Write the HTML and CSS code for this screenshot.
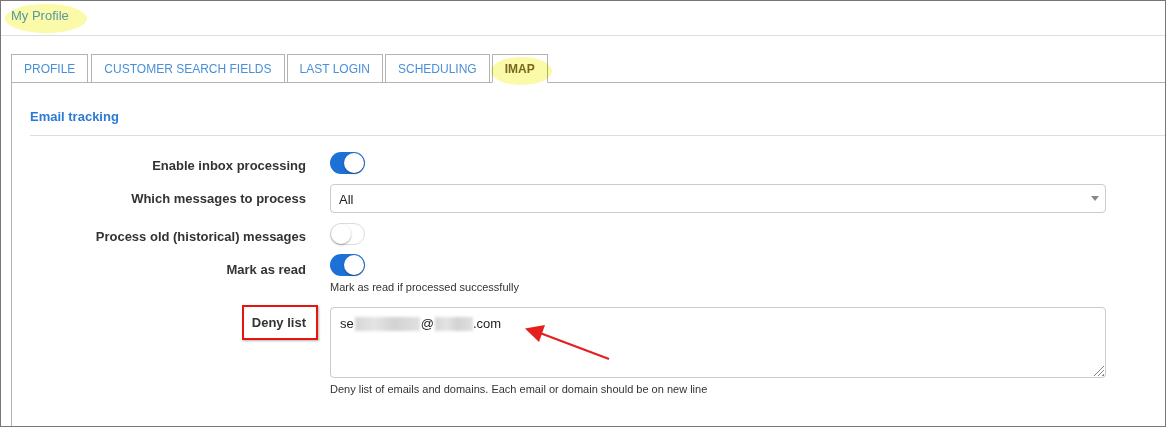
FILE: index.html
```html
<!DOCTYPE html>
<html>
<head>
<meta charset="utf-8">
<link rel="stylesheet" href="styles.css">
</head>
<body>
<div class="frame">
  <div class="page-header"><span class="page-title">My Profile</span></div>
  <ul class="tabs">
    <li class="tab">PROFILE</li>
    <li class="tab">CUSTOMER SEARCH FIELDS</li>
    <li class="tab">LAST LOGIN</li>
    <li class="tab">SCHEDULING</li>
    <li class="tab active">IMAP</li>
  </ul>
  <div class="tab-content">
    <div class="section-title">Email tracking</div>
    <div class="form">
      <div class="form-row r1">
        <div class="label">Enable inbox processing</div>
        <div class="control"><span class="switch on"></span></div>
      </div>
      <div class="form-row r2">
        <div class="label">Which messages to process</div>
        <div class="control"><div class="select"><span class="sel-text">All</span><span class="caret"></span></div></div>
      </div>
      <div class="form-row r3">
        <div class="label">Process old (historical) messages</div>
        <div class="control"><span class="switch off"></span></div>
      </div>
      <div class="form-row r4">
        <div class="label">Mark as read</div>
        <div class="control"><span class="switch on"></span><div class="help">Mark as read if processed successfully</div></div>
      </div>
      <div class="form-row r5">
        <div class="label"><span class="marked">Deny list</span></div>
        <div class="control">
          <div class="textarea">
            <div class="ta-text">se<span class="smudge w1"></span>@<span class="smudge w2"></span>.com</div>
            <div class="grip"></div>
          </div>
          <div class="help">Deny list of emails and domains. Each email or domain should be on new line</div>
        </div>
      </div>
    </div>
  </div>
  <div class="hl hl-title"></div>
  <div class="hl hl-tab"></div>
  <svg class="arrow" width="95" height="45" viewBox="0 0 95 45">
    <line x1="20" y1="13" x2="89" y2="39" stroke="#e3201e" stroke-width="2.2"/>
    <polygon points="5,8.5 25,5 19,22" fill="#e3201e"/>
  </svg>
</div>
</body>
</html>
```

FILE: styles.css
```css
html, body {
  margin: 0;
  padding: 0;
  background: #fff;
}
.frame {
  position: relative;
  width: 1166px;
  height: 427px;
  box-sizing: border-box;
  border: 1px solid #767676;
  overflow: hidden;
  font-family: "Liberation Sans", Arial, sans-serif;
  color: #333;
}
.page-header {
  height: 35px;
  border-bottom: 1px solid #dedede;
  padding: 5px 0 0 10px;
  box-sizing: border-box;
}
.page-title {
  font-size: 13px;
  line-height: 16px;
  color: #5a9cf2;
}
.tabs {
  list-style: none;
  margin: 18px 0 0 10px;
  padding: 0;
  display: flex;
  height: 28px;
  border-bottom: 1px solid #b3b3b3;
}
.tab {
  box-sizing: border-box;
  height: 29px;
  margin: 0 2px -1px 0;
  padding: 1px 12px 0;
  border: 1px solid #b3b3b3;
  font-size: 12px;
  line-height: 27px;
  color: #4a8fd8;
  background: #fff;
  white-space: nowrap;
}
.tab:first-child { margin-right: 3px; }
.tab.active {
  border-bottom-color: #fff;
  font-weight: bold;
  color: #7c682d;
}
.tab-content {
  margin: 0 -60px 0 10px;
  border-left: 1px solid #b3b3b3;
  padding: 26px 0 0 18px;
  height: 400px;
}
.section-title {
  font-size: 13px;
  font-weight: bold;
  line-height: 16px;
  color: #2b7bd6;
  padding-bottom: 10px;
  border-bottom: 1px solid #dedede;
}
.form {
  margin-top: 16px;
}
.form-row {
  display: grid;
  grid-template-columns: 276px 776px;
  column-gap: 24px;
  align-items: start;
}
.label {
  text-align: right;
  font-size: 13px;
  font-weight: bold;
  line-height: 16px;
  color: #333;
}
.r1 { margin-bottom: 10px; }
.r1 .label { padding-top: 6px; }
.r2 { margin-bottom: 10px; }
.r2 .label { padding-top: 7px; }
.r3 { margin-bottom: 9px; }
.r3 .label { padding-top: 6px; }
.r4 { margin-bottom: 13px; }
.r4 .label { padding-top: 8px; }
.r5 .label { padding-top: 8px; }
.control {
  display: flex;
  flex-direction: column;
  align-items: flex-start;
}
.switch {
  position: relative;
  display: block;
  width: 35px;
  height: 22px;
  border-radius: 11px;
  box-sizing: border-box;
}
.switch.on {
  background: #1d70d6;
}
.switch.off {
  background: #fff;
  border: 1px solid #dcdcdc;
}
.switch::after {
  content: "";
  position: absolute;
  top: 1px;
  width: 20px;
  height: 20px;
  border-radius: 50%;
  background: #fff;
  box-shadow: 0 1px 2px rgba(0,0,0,0.35);
}
.switch.on::after { right: 1px; }
.switch.off::after { left: 0; top: 0; }
.select {
  box-sizing: border-box;
  width: 776px;
  height: 29px;
  border: 1px solid #cbcbcb;
  border-radius: 4px;
  display: flex;
  align-items: center;
  justify-content: space-between;
  padding: 0 6px 0 8px;
  font-size: 13px;
  color: #222;
}
.sel-text {
  padding-top: 2px;
}
.caret {
  width: 0;
  height: 0;
  border-left: 4px solid transparent;
  border-right: 4px solid transparent;
  border-top: 5px solid #888;
}
.help {
  margin-top: 4px;
  font-size: 11px;
  line-height: 14px;
  color: #333;
}
.textarea {
  box-sizing: border-box;
  width: 776px;
  height: 71px;
  border: 1px solid #cbcbcb;
  border-radius: 4px;
  padding: 8px 1px 1px 9px;
  display: flex;
  flex-direction: column;
  justify-content: space-between;
}
.ta-text {
  font-size: 13px;
  line-height: 16px;
  color: #222;
  display: flex;
  align-items: center;
}
.smudge {
  display: inline-block;
  height: 14px;
  background: linear-gradient(90deg, #d6d6d6, #e4e4e4 30%, #d2d2d2 60%, #e0e0e0);
  filter: blur(1.5px);
}
.w1 { width: 65px; margin: 0 1px 0 1px; }
.w2 { width: 38px; margin: 0 0 0 1px; }
.grip {
  align-self: flex-end;
  width: 11px;
  height: 11px;
  background: repeating-linear-gradient(135deg, #fff 0 2px, #8a8a8a 2px 3px);
  clip-path: polygon(100% 0, 100% 100%, 0 100%);
}
.marked {
  position: relative;
}
.marked::after {
  content: "";
  position: absolute;
  top: -10px;
  bottom: -10px;
  left: -10px;
  right: -12px;
  border: 2px solid #e81414;
  box-shadow: 1px 1px 2px rgba(0,0,0,0.3);
}
.hl {
  position: absolute;
  background: #fafaa8;
  border-radius: 50%;
  mix-blend-mode: multiply;
  filter: blur(0.6px);
}
.hl-title {
  left: 4px;
  top: 3px;
  width: 82px;
  height: 29px;
}
.hl-tab {
  left: 490px;
  top: 56px;
  width: 61px;
  height: 28px;
}
.arrow {
  position: absolute;
  left: 519px;
  top: 319px;
}
```
